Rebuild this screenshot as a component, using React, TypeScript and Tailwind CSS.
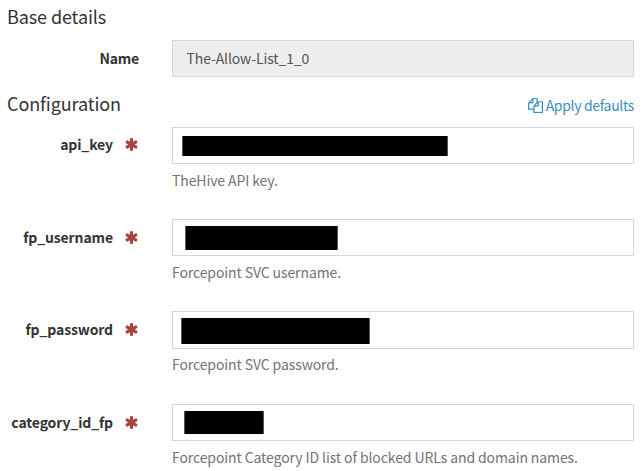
type FieldProps = {
  name: string;
  help: string;
  rowClass: string;
  labelClass: string;
  inputClass: string;
  maskClass: string;
};

const FIELDS: FieldProps[] = [
  { name: 'api_key', help: 'TheHive API key.', rowClass: 'h-[92px]', labelClass: 'h-[35px]', inputClass: 'h-[37px] pt-[8px] pl-[9px]', maskClass: 'h-[20px] w-[266px]' },
  { name: 'fp_username', help: 'Forcepoint SVC username.', rowClass: 'h-[92px]', labelClass: 'h-[37px]', inputClass: 'h-[37px] pt-[6px] pl-[12px]', maskClass: 'h-[24px] w-[153px]' },
  { name: 'fp_password', help: 'Forcepoint SVC password.', rowClass: 'h-[93px]', labelClass: 'h-[37px]', inputClass: 'h-[38px] -mb-px pt-[6px] pl-[8px]', maskClass: 'h-[26px] w-[189px]' },
  { name: 'category_id_fp', help: 'Forcepoint Category ID list of blocked URLs and domain names.', rowClass: 'h-[67px]', labelClass: 'h-[37px]', inputClass: 'h-[37px] pt-[6px] pl-[11px]', maskClass: 'h-[23px] w-[80px]' },
];

function Asterisk() {
  return (
    <svg viewBox="0 0 1792 1792" className="ml-[11px] h-[15px] w-[15px] shrink-0 fill-[#a94442]">
      <path d="M1546 1050q46 26 59.5 77.5T1592 1225l-64 110q-26 46-77.5 59.5T1353 1381l-266-153v307q0 52-38 90t-90 38H831q-52 0-90-38t-38-90v-307l-266 153q-46 26-97.5 12.5T262 1335l-64-110q-26-46-12.5-97.5T244 1050l266-154-266-154q-46-26-59.5-77.5T197 567l64-110q26-46 77.5-59.5T437 411l266 153V257q0-52 38-90t90-38h128q52 0 90 38t38 90v307l266-153q46-26 97.5-12.5T1528 457l64 110q26 46 12.5 97.5T1546 742l-266 154z" />
    </svg>
  );
}

function FilesIcon() {
  return (
    <svg viewBox="0 0 1792 1792" className="mr-[3px] h-[15px] w-[15px] fill-[#3c8dbc] stroke-[#3c8dbc] stroke-[30]">
      <path d="M1696 384q40 0 68 28t28 68v1216q0 40-28 68t-68 28H736q-40 0-68-28t-28-68v-288H96q-40 0-68-28t-28-68V672q0-40 20-88t48-76L476 100q28-28 76-48t88-20h416q40 0 68 28t28 68v328q68-40 128-40h416zm-544 213L853 896h299V597zM512 213L213 512h299V213zm196 647l316-316V128H640v416q0 40-28 68t-68 28H128v640h512v-256q0-40 20-88t48-76zm956 804V512h-384v416q0 40-28 68t-68 28H768v640h896z" />
    </svg>
  );
}

function Field({ name, help, rowClass, labelClass, inputClass, maskClass }: FieldProps) {
  return (
    <div className={`flex ${rowClass}`}>
      <div className={`flex w-[172px] items-center justify-end pr-[33px] font-bold tracking-[-0.12px] ${labelClass}`}>
        <span>{name}</span>
        <Asterisk />
      </div>
      <div className="w-[462px]">
        <div className={`border border-[#d2d6de] bg-white ${inputClass}`}>
          <div className={`border-x border-[#555] bg-black ${maskClass}`} />
        </div>
        <p className="mt-[5px] leading-[22px] tracking-[-0.1px] whitespace-nowrap text-[#737373]">{help}</p>
      </div>
    </div>
  );
}

export default function App() {
  return (
    <main className="h-[471px] w-[644px] overflow-hidden bg-white font-['Noto_Sans_CJK_SC',sans-serif] text-[14px] text-[#333]">
      <h4 className="h-[40px] pt-[4px] pl-[7px] text-[18px] leading-[24px] tracking-[-0.1px]">Base details</h4>
      <div className="flex h-[50px]">
        <div className="h-[37px] w-[172px] pr-[33px] text-right leading-[37px] font-bold tracking-[-0.2px]">Name</div>
        <div className="h-[37px] w-[462px] border border-[#d2d6de] bg-[#eee] pl-[13.5px] leading-[35px] tracking-[-0.12px] text-[#555]">The-Allow-List_1_0</div>
      </div>
      <div className="flex h-[37px] w-[634px] justify-between pl-[7px]">
        <h4 className="pt-px text-[18px] leading-[24px] tracking-[-0.1px]">Configuration</h4>
        <a className="flex h-[31px] items-center text-[#3c8dbc]">
          <FilesIcon />
          <span className="tracking-[-0.33px]">Apply defaults</span>
        </a>
      </div>
      {FIELDS.map((field) => (
        <Field key={field.name} {...field} />
      ))}
    </main>
  );
}
